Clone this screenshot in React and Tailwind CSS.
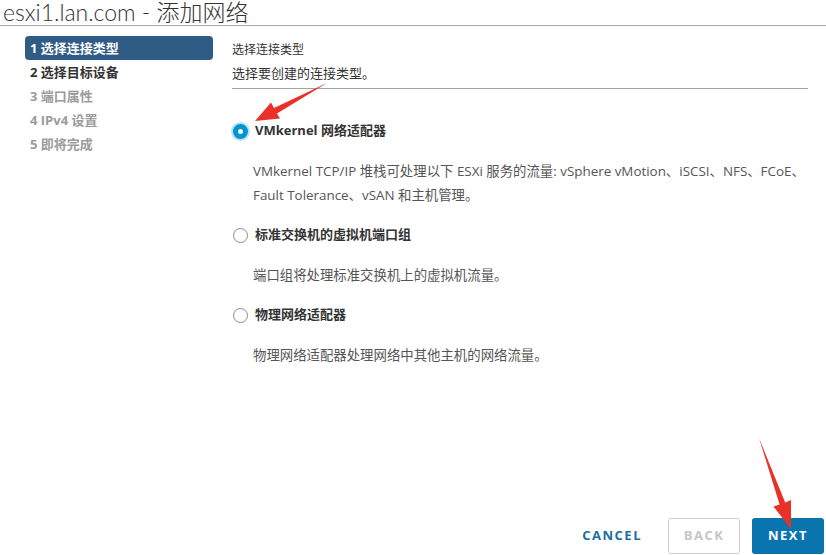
import React from 'react';

const font = { fontFamily: '"Open Sans", "Noto Sans CJK SC", sans-serif' };

const steps = [
  { label: '1 选择连接类型', state: 'active' },
  { label: '2 选择目标设备', state: 'done' },
  { label: '3 端口属性', state: 'todo' },
  { label: '4 IPv4 设置', state: 'todo' },
  { label: '5 即将完成', state: 'todo' },
];

const options = [
  {
    label: 'VMkernel 网络适配器',
    checked: true,
    desc: [
      'VMkernel TCP/IP 堆栈可处理以下 ESXi 服务的流量: vSphere vMotion、iSCSI、NFS、FCoE、',
      'Fault Tolerance、vSAN 和主机管理。',
    ],
  },
  { label: '标准交换机的虚拟机端口组', checked: false, desc: ['端口组将处理标准交换机上的虚拟机流量。'] },
  { label: '物理网络适配器', checked: false, desc: ['物理网络适配器处理网络中其他主机的网络流量。'] },
];

const Radio = ({ checked }) =>
  checked ? (
    <span className="w-[15px] h-[15px] rounded-full border-[5px] border-[#0094d2] bg-white shadow-[0_0_0_2px_#b9e2f5] shrink-0" />
  ) : (
    <span className="w-[15px] h-[15px] rounded-full border border-[#8a8a8a] bg-white shrink-0" />
  );

export default function App() {
  return (
    <div className="relative w-[826px] h-[555px] bg-white overflow-hidden flex flex-col" style={font}>
      <div
        className="h-[26px] border-b border-[#a9a9a9] pl-[3px] text-[23px] leading-[25px] font-light text-[#333] whitespace-nowrap"
        style={{ fontFamily: 'Lato, "Noto Sans CJK SC", sans-serif' }}
      >
        esxi1.lan.com - 添加网络
      </div>

      <div className="flex flex-1">
        {/* wizard steps */}
        <div className="w-[232px] pl-[25px] pr-[19px] pt-[10px] shrink-0">
          {steps.map(s => (
            <div
              key={s.label}
              className={
                s.state === 'active'
                  ? 'h-[24px] rounded-[4px] bg-[#2f5b85] text-white pl-[5px] text-[13px] font-bold leading-[24px]'
                  : s.state === 'done'
                  ? 'h-[24px] pl-[5px] text-[13px] font-bold leading-[24px] text-[#333]'
                  : 'h-[24px] pl-[5px] text-[13px] font-bold leading-[24px] text-[#9b9b9b]'
              }
            >
              {s.label}
            </div>
          ))}
        </div>

        {/* content */}
        <div className="flex-1 flex flex-col pr-[18px]">
          <div className="pt-[16px] border-b border-[#a3a3a3] pb-[2px]">
            <div className="text-[12px] leading-[16px] text-[#333]">选择连接类型</div>
            <div className="text-[13px] leading-[26px] text-[#333] mt-[2px]">选择要创建的连接类型。</div>
          </div>

          <div className="pt-[31px] flex flex-col">
            {options.map(o => (
              <div key={o.label} className="mb-[17px]">
                <div className="flex items-center gap-[7px] h-[22px] pl-[1px]">
                  <Radio checked={o.checked} />
                  <span className="text-[13px] font-bold text-[#333]">{o.label}</span>
                </div>
                <div className="pl-[21px] pt-[17px]">
                  {o.desc.map(d => (
                    <div key={d} className="text-[13.4px] leading-[24px] text-[#555] whitespace-nowrap">
                      {d}
                    </div>
                  ))}
                </div>
              </div>
            ))}
          </div>

          <div className="mt-auto flex items-center justify-end gap-[12px] pb-[1px] -mr-[16px]">
            <button className="h-[36px] px-[14px] text-[13px] font-bold tracking-[1.5px] text-[#1b6fa3]">CANCEL</button>
            <button className="h-[36px] w-[72px] rounded-[3px] border border-[#cfcfcf] text-[13px] font-bold tracking-[1.5px] text-[#c6c6c6]">
              BACK
            </button>
            <button className="h-[36px] w-[72px] rounded-[3px] bg-[#0a74ae] text-[13px] font-bold tracking-[1.5px] text-white">
              NEXT
            </button>
          </div>
        </div>
      </div>

      {/* annotation arrows */}
      <svg className="absolute inset-0 pointer-events-none" width="826" height="555">
        <polygon
          points="255,121 280,118.5 277,113.4 327,83 274,108 271,102.5"
          fill="#ea3127"
        />
        <polygon
          points="791,529 773.5,506.5 779.6,504.5 759,438 785.2,502.5 791,500"
          fill="#ea3127"
        />
      </svg>
    </div>
  );
}
